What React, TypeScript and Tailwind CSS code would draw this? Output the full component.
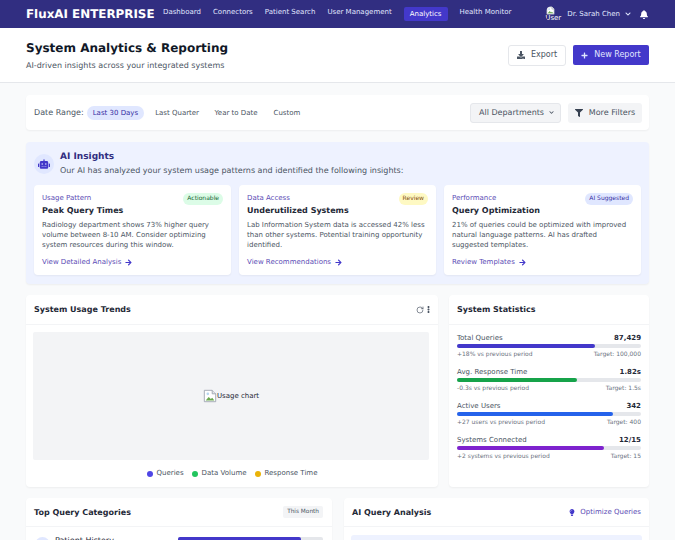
import { FaArrowRight, FaBell, FaChevronDown, FaDownload, FaEllipsisV, FaFilter, FaLightbulb, FaPlus, FaRobot } from "react-icons/fa";
import { RotateCw } from "lucide-react";

const navLinks = ["Dashboard", "Connectors", "Patient Search", "User Management", "Analytics", "Health Monitor"];

const insights = [
    {
        kind: "Usage Pattern",
        badge: "Actionable",
        badgeClass: "bg-[#dcfce7] text-[#166534]",
        title: "Peak Query Times",
        body: "Radiology department shows 73% higher query volume between 8-10 AM. Consider optimizing system resources during this window.",
        link: "View Detailed Analysis",
    },
    {
        kind: "Data Access",
        badge: "Review",
        badgeClass: "bg-[#fef9c3] text-[#854d0e]",
        title: "Underutilized Systems",
        body: "Lab Information System data is accessed 42% less than other systems. Potential training opportunity identified.",
        link: "View Recommendations",
    },
    {
        kind: "Performance",
        badge: "AI Suggested",
        badgeClass: "bg-[#e0e7ff] text-[#3730a3]",
        title: "Query Optimization",
        body: "21% of queries could be optimized with improved natural language patterns. AI has drafted suggested templates.",
        link: "Review Templates",
    },
];

const stats = [
    { label: "Total Queries", value: "87,429", bar: "w-[75%] bg-[#4338ca]", delta: "+18% vs previous period", target: "Target: 100,000" },
    { label: "Avg. Response Time", value: "1.82s", bar: "w-[65%] bg-[#16a34a]", delta: "-0.3s vs previous period", target: "Target: 1.5s" },
    { label: "Active Users", value: "342", bar: "w-[85%] bg-[#2563eb]", delta: "+27 users vs previous period", target: "Target: 400" },
    { label: "Systems Connected", value: "12/15", bar: "w-[80%] bg-[#7e22ce]", delta: "+2 systems vs previous period", target: "Target: 15" },
];

function BrokenImage({ className }: { className: string }) {
    return (
        <svg viewBox="0 0 16 16" className={className}>
            <path d="M1.5 1.5h9l4 4v9h-13z" fill="#fff" stroke="#9ca3af" />
            <path d="M10.5 1.5v4h4" fill="#e5e7eb" stroke="#9ca3af" />
            <path d="M3 13l3.5-4 2.5 2.5 1.5-1.5 2.5 3z" fill="#6aa84f" />
            <circle cx="5.5" cy="5.5" r="1.5" fill="#b7d7f0" />
        </svg>
    );
}

function CardTitle({ children }: { children: string }) {
    return <h3 className="mt-[1px] text-[8px] leading-[14px] font-bold text-[#1f2937]">{children}</h3>;
}

export default function App() {
    return (
        <div className="h-[540px] w-[675px] overflow-hidden bg-[#f9fafb] font-['DejaVu_Sans',sans-serif] [text-rendering:geometricPrecision]">
            <nav className="flex h-[28px] items-start bg-[#312e81] pl-[26px] pr-[27px] text-white">
                <span className="mt-[5px] w-[137px] text-[11.9px] leading-[18px] font-bold whitespace-nowrap">FluxAI ENTERPRISE</span>
                <div className="flex items-start gap-[12px] text-[7px] leading-[12px] text-[#e0e7ff]">
                    {navLinks.map((link) =>
                        link === "Analytics" ? (
                            <span key={link} className="mt-[7px] rounded-[2px] bg-[#4338ca] px-[6px] py-[1px] text-white">{link}</span>
                        ) : (
                            <span key={link} className="mt-[6px] whitespace-nowrap">{link}</span>
                        ),
                    )}
                </div>
                <div className="ml-auto flex h-full items-center text-[7px] text-[#e0e7ff]">
                    <div className="relative mr-[4px] h-[18px] w-[18px] overflow-hidden rounded-full text-[7px] leading-[7px] text-white">
                        <BrokenImage className="ml-[1px] mt-[1px] h-[9px] w-[9px]" />
                        <span className="absolute left-0 top-[10px]">User</span>
                    </div>
                    <span className="whitespace-nowrap">Dr. Sarah Chen</span>
                    <FaChevronDown className="ml-[5px] h-[6px] w-[6px]" />
                    <FaBell className="ml-[9px] h-[9px] w-[8px] text-white" />
                </div>
            </nav>

            <header className="flex h-[55px] items-center justify-between border-b border-[#e5e7eb] bg-white pl-[26px] pr-[26px]">
                <div>
                    <h1 className="text-[12px] leading-[18px] font-bold text-[#111827]">System Analytics & Reporting</h1>
                    <p className="mt-[2px] text-[8px] leading-[13px] text-[#4b5563]">AI-driven insights across your integrated systems</p>
                </div>
                <div className="flex items-center gap-[7px] text-[8px]">
                    <button className="flex h-[21px] w-[58px] items-center justify-center gap-[6px] rounded-[3px] border border-[#e5e7eb] bg-white text-[#4b5563]">
                        <FaDownload className="h-[8px] w-[8px]" />
                        Export
                    </button>
                    <button className="flex h-[20px] w-[76px] items-center justify-center gap-[6px] rounded-[2px] bg-[#4338ca] text-[#e0e7ff]">
                        <FaPlus className="h-[7px] w-[7px]" />
                        New Report
                    </button>
                </div>
            </header>

            <main className="px-[26px] pt-[12px]">
                <section className="flex h-[35px] items-center rounded-[4px] bg-white pl-[8px] pr-[7px] shadow-[0_1px_2px_rgba(0,0,0,0.05)]">
                    <span className="mr-[3px] text-[8px] text-[#4b5563]">Date Range:</span>
                    <span className="rounded-full bg-[#e0e7ff] px-[6px] py-[1px] text-[7px] leading-[12px] text-[#3730a3]">Last 30 Days</span>
                    <span className="ml-[11px] mt-[1px] text-[7px] text-[#4b5563]">Last Quarter</span>
                    <span className="ml-[15.5px] mt-[1px] text-[7px] text-[#4b5563]">Year to Date</span>
                    <span className="ml-[16px] mt-[1px] text-[7px] text-[#4b5563]">Custom</span>
                    <div className="ml-auto flex items-center gap-[7px] text-[8px] text-[#4b5563]">
                        <div className="flex h-[20px] w-[91px] items-center justify-between rounded-[3px] border border-[#e5e7eb] bg-[#f3f4f6] pl-[8px] pr-[6px]">
                            All Departments
                            <FaChevronDown className="h-[5px] w-[5px]" />
                        </div>
                        <div className="flex h-[20px] w-[74px] items-center justify-center gap-[6px] rounded-[3px] bg-[#f3f4f6]">
                            <FaFilter className="h-[8px] w-[8px] text-[#374151]" />
                            More Filters
                        </div>
                    </div>
                </section>

                <section className="mt-[12px] h-[142px] rounded-[4px] bg-[#eef2ff] px-[8px] pt-[9px] shadow-[0_1px_2px_rgba(0,0,0,0.05)]">
                    <div className="flex items-center gap-[6px]">
                        <div className="flex h-[20px] w-[20px] items-center justify-center rounded-full bg-[#e0e7ff]">
                            <FaRobot className="h-[10px] w-[12px] text-[#4338ca]" />
                        </div>
                        <div>
                            <h2 className="text-[9px] leading-[13px] font-bold text-[#312e81]">AI Insights</h2>
                            <p className="text-[8px] leading-[13px] text-[#4b5563]">Our AI has analyzed your system usage patterns and identified the following insights:</p>
                        </div>
                    </div>
                    <div className="mt-[8px] grid grid-cols-3 gap-[8px]">
                        {insights.map((item) => (
                            <div key={item.title} className="h-[90px] rounded-[4px] bg-white px-[8px] pt-[8px] shadow-[0_1px_2px_rgba(0,0,0,0.05)]">
                                <div className="flex items-start justify-between">
                                    <div>
                                        <p className="text-[7px] leading-[11px] text-[#5b4bb5]">{item.kind}</p>
                                        <h4 className="text-[8px] leading-[13px] font-bold text-[#1f2937]">{item.title}</h4>
                                    </div>
                                    <span className={`rounded-full px-[4px] py-[1px] text-[6px] leading-[10px] ${item.badgeClass}`}>{item.badge}</span>
                                </div>
                                <p className="mt-[3px] text-[7px] leading-[10px] text-[#4b5563]">{item.body}</p>
                                <p className="mt-[7px] flex items-center gap-[4px] text-[7px] leading-[11px] text-[#5b4bb5]">
                                    {item.link}
                                    <FaArrowRight className="h-[7px] w-[7px] text-[#4338ca]" />
                                </p>
                            </div>
                        ))}
                    </div>
                </section>

                <div className="mt-[11px] flex gap-[11px]">
                    <section className="h-[192px] w-[412px] rounded-[4px] bg-white shadow-[0_1px_2px_rgba(0,0,0,0.05)]">
                        <div className="flex h-[30px] items-center justify-between border-b border-[#f3f4f6] pl-[8px] pr-[6px]">
                            <CardTitle>System Usage Trends</CardTitle>
                            <div className="flex items-center gap-[1px] text-[#4b5563]">
                                <RotateCw className="h-[8px] w-[8px]" />
                                <FaEllipsisV className="h-[7px] w-[7px]" />
                            </div>
                        </div>
                        <div className="ml-[7px] mr-[9px] mt-[7px] flex h-[128px] items-center justify-center rounded-[2px] bg-[#f3f4f6] text-[7px] text-[#1f2937]">
                            <BrokenImage className="h-[14px] w-[14px]" />
                            <span className="mt-[1px]">Usage chart</span>
                        </div>
                        <div className="mt-[8px] flex justify-center gap-[8px] text-[7px] leading-[11px] text-[#4b5563]">
                            <span className="flex items-center gap-[4px]"><i className="h-[6px] w-[6px] rounded-full bg-[#4f46e5]" />Queries</span>
                            <span className="flex items-center gap-[4px]"><i className="h-[6px] w-[6px] rounded-full bg-[#22c55e]" />Data Volume</span>
                            <span className="flex items-center gap-[4px]"><i className="h-[6px] w-[6px] rounded-full bg-[#eab308]" />Response Time</span>
                        </div>
                    </section>

                    <section className="h-[192px] w-[200px] rounded-[4px] bg-white shadow-[0_1px_2px_rgba(0,0,0,0.05)]">
                        <div className="flex h-[30px] items-center border-b border-[#f3f4f6] pl-[8px]">
                            <CardTitle>System Statistics</CardTitle>
                        </div>
                        <div className="flex flex-col gap-[7px] px-[8px] pt-[8px]">
                            {stats.map((s) => (
                                <div key={s.label}>
                                    <div className="flex justify-between text-[7px] leading-[10px]">
                                        <span className="text-[#4b5563]">{s.label}</span>
                                        <span className="font-bold text-[#1f2937]">{s.value}</span>
                                    </div>
                                    <div className="mt-[1px] h-[4px] rounded-full bg-[#e5e7eb]">
                                        <div className={`h-full rounded-full ${s.bar}`} />
                                    </div>
                                    <div className="mt-[2px] flex justify-between text-[6px] leading-[10px] text-[#6b7280]">
                                        <span>{s.delta}</span>
                                        <span>{s.target}</span>
                                    </div>
                                </div>
                            ))}
                        </div>
                    </section>
                </div>

                <div className="mt-[11px] flex gap-[12px]">
                    <section className="h-[120px] w-[306px] rounded-[4px] bg-white shadow-[0_1px_2px_rgba(0,0,0,0.05)]">
                        <div className="flex h-[29px] items-center justify-between border-b border-[#f3f4f6] pl-[8px] pr-[9px]">
                            <CardTitle>Top Query Categories</CardTitle>
                            <span className="rounded-[2px] bg-[#f3f4f6] px-[4px] py-[1px] text-[5.8px] leading-[10px] text-[#4b5563]">This Month</span>
                        </div>
                        <div className="flex items-start pl-[9px] pr-[9px] pt-[10px]">
                            <div className="h-[15px] w-[15px] rounded-full bg-[#e0e7ff]" />
                            <span className="ml-[5px] text-[8px] leading-[8px] text-[#1f2937]">Patient History</span>
                            <div className="ml-auto h-[10px] w-[145px] rounded-[2px] bg-[#e5e7eb]">
                                <div className="h-full w-[85%] rounded-[2px] bg-[#4338ca]" />
                            </div>
                        </div>
                    </section>
                    <section className="h-[120px] w-[305px] rounded-[4px] bg-white shadow-[0_1px_2px_rgba(0,0,0,0.05)]">
                        <div className="flex h-[29px] items-center justify-between border-b border-[#f3f4f6] pl-[8px] pr-[8px]">
                            <CardTitle>AI Query Analysis</CardTitle>
                            <span className="flex items-center gap-[5px] text-[7px] text-[#5b4bb5]">
                                <FaLightbulb className="h-[7px] w-[6px] text-[#4338ca]" />
                                Optimize Queries
                            </span>
                        </div>
                        <div className="mx-[7px] mt-[8px] h-[60px] rounded-[3px] bg-[#eef2ff]" />
                    </section>
                </div>
            </main>
        </div>
    );
}
